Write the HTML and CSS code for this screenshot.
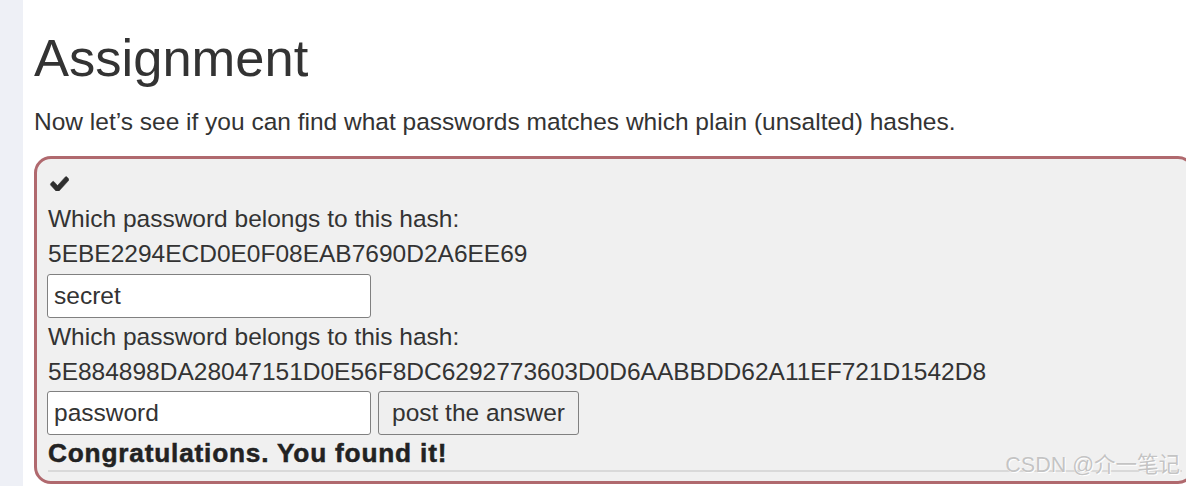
FILE: index.html
```html
<!DOCTYPE html>
<html lang="en">
<head>
<meta charset="utf-8">
<title>Assignment</title>
<link rel="stylesheet" href="styles.css">
</head>
<body>
<div class="page">
  <aside class="sidebar"></aside>
  <main class="content">
    <h1 class="title">Assignment</h1>
    <p class="intro">Now let’s see if you can find what passwords matches which plain (unsalted) hashes.</p>
    <form class="attack">
      <div class="check-line">
        <svg class="check" viewBox="0 290 1680 1140" preserveAspectRatio="none" aria-hidden="true"><path d="M1671 566q0 40-28 68l-724 724-136 136q-28 28-68 28t-68-28l-136-136-362-362q-28-28-28-68t28-68l136-136q28-28 68-28t68 28l294 295 656-657q28-28 68-28t68 28l136 136q28 28 28 68z" fill="#2f2f2f" stroke="#2f2f2f" stroke-width="40"/></svg>
      </div>
      <div class="line">Which password belongs to this hash:</div>
      <div class="line">5EBE2294ECD0E0F08EAB7690D2A6EE69</div>
      <div class="row first"><input class="field" type="text" value="secret"></div>
      <div class="line">Which password belongs to this hash:</div>
      <div class="line">5E884898DA28047151D0E56F8DC6292773603D0D6AABBDD62A11EF721D1542D8</div>
      <div class="row second"><input class="field" type="text" value="password"><button class="submit" type="button">post the answer</button></div>
      <div class="feedback">Congratulations. You found it!</div>
      <hr class="divider">
    </form>
  </main>
</div>
<div class="watermark">CSDN @介一笔记</div>
</body>
</html>
```

FILE: styles.css
```css
html, body {
  margin: 0;
  padding: 0;
  overflow: hidden;
  background: #ffffff;
}

body {
  font-family: "Liberation Sans", Arial, "Noto Sans CJK SC", sans-serif;
  color: #333333;
  width: 1186px;
  height: 486px;
  position: relative;
}

.page {
  display: flex;
  height: 486px;
  overflow: hidden;
}

.sidebar {
  width: 23px;
  flex: none;
  background: #eef0f6;
}

.content {
  flex: none;
  width: 1172px;
  padding: 29px 0 0 11px;
  box-sizing: border-box;
}

.title {
  margin: 0;
  font-size: 52.5px;
  line-height: 57.75px;
  font-weight: 400;
  color: #333333;
}

.intro {
  margin: 17px 0 0 0;
  font-size: 24.5px;
  line-height: 35px;
}

.attack {
  margin-top: 17px;
  border: 3px solid #b0696e;
  border-radius: 17px;
  background: #f0f0f0;
  padding: 7px 10px 9px 11px;
  font-size: 24.5px;
  line-height: 35px;
}

.check-line {
  height: 35px;
  display: flex;
  align-items: center;
  padding-left: 1px;
}

.check {
  width: 20px;
  height: 15px;
  display: block;
  margin-top: 1px;
}

.line {
  height: 35px;
  white-space: nowrap;
}

.row {
  display: flex;
  gap: 7px;
  margin-left: -1px;
}

.row.first {
  margin: 3px 0 1px -1px;
}

.row.second {
  margin: 2px 0 0 -1px;
}

.field {
  width: 324px;
  height: 44px;
  box-sizing: border-box;
  border: 1px solid #808080;
  border-radius: 3px;
  background: #ffffff;
  padding: 0 6px;
  font-family: "Liberation Sans", Arial, sans-serif;
  font-size: 24.5px;
  color: #333333;
  margin: 0;
}

.submit {
  height: 44px;
  box-sizing: border-box;
  border: 1px solid #808080;
  border-radius: 3px;
  background: #efefef;
  padding: 0 13px;
  font-family: "Liberation Sans", Arial, sans-serif;
  font-size: 24.5px;
  color: #333333;
  margin: 0;
}

.feedback {
  margin-top: 4px;
  font-size: 26.25px;
  line-height: 28px;
  font-weight: 700;
  letter-spacing: 0.8px;
  color: #222222;
  -webkit-text-stroke: 0.5px #222222;
}

.divider {
  margin: 3px 0 0 0;
  border: 0;
  border-top: 2px solid #d9d9d9;
  height: 0;
}

.watermark {
  position: absolute;
  right: 6px;
  bottom: 8px;
  font-size: 21.5px;
  line-height: 26px;
  color: #c4c4c4;
  text-shadow: 0 0 1px #ffffff, 1px 1px 0 #ffffff;
  font-family: "Liberation Sans", Arial, "Noto Sans CJK SC", sans-serif;
}
```
